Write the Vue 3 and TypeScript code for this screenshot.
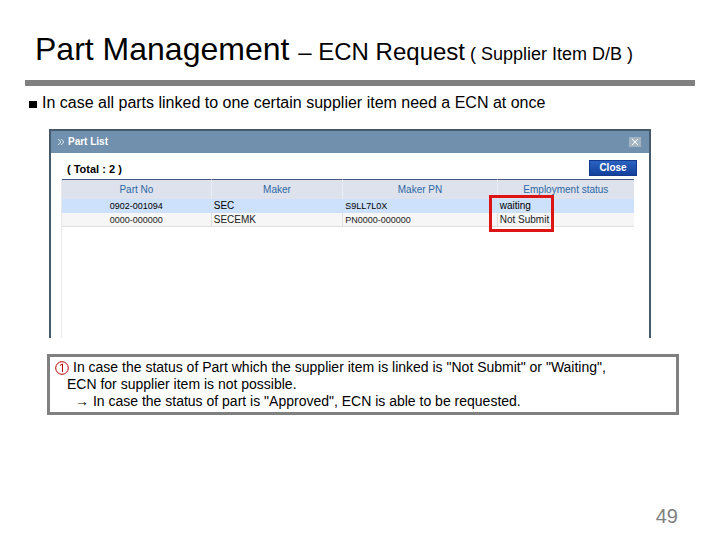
<script setup lang="ts">
interface Part {
  partNo: string
  maker: string
  makerPn: string
  status: string
}

const parts: Part[] = [
  { partNo: '0902-001094', maker: 'SEC', makerPn: 'S9LL7L0X', status: 'waiting' },
  { partNo: '0000-000000', maker: 'SECEMK', makerPn: 'PN0000-000000', status: 'Not Submit' },
]
</script>

<template>
  <main class="slide">
    <h1 class="title">
      Part Management <span class="sub">– ECN Request</span><span class="scope">&#32;( Supplier Item D/B )</span>
    </h1>
    <p class="lead"><span class="square"></span>In case all parts linked to one certain supplier item need a ECN at once</p>

    <section class="window" aria-labelledby="window-title">
      <header class="bar">
        <svg class="chevrons" viewBox="0 0 8 8" aria-hidden="true">
          <path d="M1 1l3 3-3 3M4 1l3 3-3 3" />
        </svg>
        <h2 id="window-title" class="bar-title">Part List</h2>
        <button class="dismiss" type="button" aria-label="Dismiss">
          <svg viewBox="0 0 12 10" aria-hidden="true"><path d="M3 2l6 6M9 2l-6 6" /></svg>
        </button>
      </header>
      <div class="tools">
        <span class="total">( Total : {{ parts.length }} )</span>
        <button class="close" type="button">Close</button>
      </div>
      <div class="pane">
        <table class="grid">
          <colgroup>
            <col class="c-part" />
            <col class="c-maker" />
            <col class="c-pn" />
            <col class="c-status" />
          </colgroup>
          <thead>
            <tr>
              <th scope="col">Part No</th>
              <th scope="col">Maker</th>
              <th scope="col">Maker PN</th>
              <th scope="col">Employment status</th>
            </tr>
          </thead>
          <tbody>
            <tr v-for="(part, i) in parts" :key="part.partNo" :class="{ selected: i === 0 }">
              <td class="code center">{{ part.partNo }}</td>
              <td>{{ part.maker }}</td>
              <td class="code">{{ part.makerPn }}</td>
              <td :class="{ anchor: i === 0 }">
                <span v-if="i === 0" class="marker"></span>{{ part.status }}
              </td>
            </tr>
          </tbody>
        </table>
      </div>
    </section>

    <section class="note">
      <p class="line first">
        <svg class="num" viewBox="0 0 14 14" role="img" aria-label="1">
          <circle cx="7" cy="7" r="6.3" />
          <path d="M5 4.5L7.5 3v8" />
        </svg>
        In case the status of Part which the supplier item is linked is "Not Submit" or "Waiting",
      </p>
      <p class="line second">ECN for supplier item is not possible.</p>
      <p class="line third">→ In case the status of part is "Approved", ECN is able to be requested.</p>
    </section>

    <footer class="page">49</footer>
  </main>
</template>

<style>
body {
  background: #fff;
}
</style>

<style scoped>
.slide {
  box-sizing: border-box;
  min-height: 100vh;
  display: flex;
  flex-direction: column;
  padding: 29px 25px 12px;
  font-family: "Liberation Sans", Arial, sans-serif;
  color: #000;
}
.title {
  margin: 0;
  padding: 0 0 6px 10px;
  border-bottom: 6px solid #808080;
  font-size: 32px;
  line-height: 40px;
  font-weight: 400;
  white-space: nowrap;
}
.sub {
  font-size: 24px;
}
.scope {
  font-size: 18px;
}
.lead {
  display: flex;
  align-items: center;
  gap: 5px;
  margin: 7px 0 0 4px;
  font-size: 16px;
  line-height: 19px;
}
.square {
  width: 8px;
  height: 7px;
  margin-top: 4px;
  background: #000;
}
.window {
  margin: 17px 44px 0 24px;
  border: 2px solid #455a6b;
  border-bottom: 0;
}
.bar {
  display: flex;
  align-items: center;
  height: 22px;
  padding: 0 8px 0 6px;
  background: #7190ae;
}
.chevrons {
  width: 8px;
  height: 8px;
  fill: none;
  stroke: #dce6f0;
}
.bar-title {
  flex: 1;
  margin: 0 0 0 3px;
  font-size: 10px;
  line-height: 12px;
  color: #fff;
}
.dismiss {
  width: 12px;
  height: 10px;
  padding: 0;
  border: 0;
  background: #a3b4c4;
}
.dismiss svg {
  display: block;
  width: 12px;
  height: 10px;
  stroke: #fff;
}
.tools {
  display: flex;
  align-items: center;
  justify-content: space-between;
  height: 18px;
  padding: 6px 12px 1px 16px;
}
.total {
  font-size: 11px;
  line-height: 12px;
  font-weight: 700;
  padding-top: 2px;
}
.close {
  width: 48px;
  height: 16px;
  padding: 0;
  border: 1px solid #12398d;
  background: linear-gradient(#2b62c0, #123f9c);
  color: #fff;
  font: 700 10px/12px "Liberation Sans", Arial, sans-serif;
}
.pane {
  min-height: 159px;
  margin: 1px 15px 0 10px;
  border-left: 1px solid #e8eaec;
}
.grid {
  width: 100%;
  table-layout: fixed;
  border-collapse: separate;
  border-spacing: 0;
  font-size: 10px;
  line-height: 12px;
}
.c-part {
  width: 26%;
}
.c-maker {
  width: 23%;
}
.c-pn {
  width: 27%;
}
.c-status {
  width: 24%;
}
.grid th {
  height: 19px;
  padding: 0;
  border-top: 1px solid #40587c;
  background: #dde2ed;
  color: #2d68a4;
  font-weight: 400;
  vertical-align: middle;
}
.grid th + th {
  border-left: 1px solid #e8ecf3;
}
.grid td {
  height: 13px;
  padding: 0 2px;
  border-bottom: 1px solid #dedede;
  background: #f6f6f6;
  color: #222;
  white-space: nowrap;
}
.grid td + td {
  border-left: 1px solid #dedede;
}
.grid .selected td {
  border-color: #cde1fc;
  background: #cde1fc;
  color: #000;
}
.grid .code {
  font-size: 9px;
}
.grid .center {
  text-align: center;
}
.anchor {
  position: relative;
}
.marker {
  position: absolute;
  top: -4px;
  left: -9px;
  box-sizing: border-box;
  width: 65px;
  height: 37px;
  border: 3px solid #dc1414;
}
.note {
  margin: 16px 16px 0 22px;
  padding: 2px 5px;
  border: 3px solid #808080;
  font-size: 14px;
  line-height: 17px;
}
.line {
  margin: 0;
}
.first {
  display: flex;
  align-items: center;
  gap: 4px;
}
.num {
  flex: none;
  width: 14px;
  height: 14px;
  fill: none;
  stroke: #c00000;
}
.second {
  padding-left: 12px;
}
.third {
  padding-left: 20px;
}
.page {
  margin-top: auto;
  padding-right: 17px;
  text-align: right;
  font-size: 20px;
  line-height: 23px;
  color: #808080;
}
</style>
